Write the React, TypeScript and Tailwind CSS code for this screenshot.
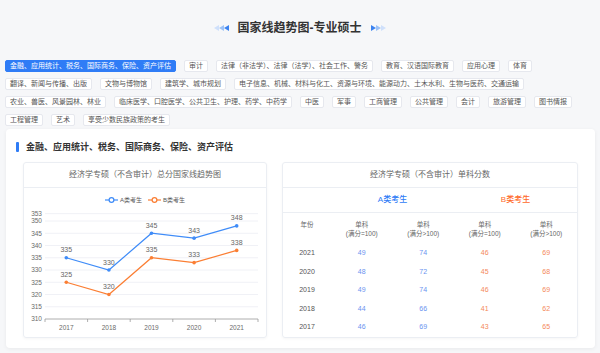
import React from "react";

const FONT = { fontFamily: '"Liberation Sans", "Noto Sans CJK SC", sans-serif' };

const rows: string[][] = [
  [
    "金融、应用统计、税务、国际商务、保险、资产评估",
    "审计",
    "法律（非法学）、法律（法学）、社会工作、警务",
    "教育、汉语国际教育",
    "应用心理",
    "体育",
  ],
  [
    "翻译、新闻与传播、出版",
    "文物与博物馆",
    "建筑学、城市规划",
    "电子信息、机械、材料与化工、资源与环境、能源动力、土木水利、生物与医药、交通运输",
  ],
  [
    "农业、兽医、风景园林、林业",
    "临床医学、口腔医学、公共卫生、护理、药学、中药学",
    "中医",
    "军事",
    "工商管理",
    "公共管理",
    "会计",
    "旅游管理",
    "图书情报",
  ],
  ["工程管理", "艺术", "享受少数民族政策的考生"],
];

const tags = rows.flat();

const years = ["2017", "2018", "2019", "2020", "2021"];
const aData = [335, 330, 345, 343, 348];
const bData = [325, 320, 335, 333, 338];

const yOf = (v: number) => 131 - (v - 310) * 2.45;
const xs = [42.3, 84.9, 127.5, 170.1, 212.7];
const ticksX = [21, 63.6, 106.2, 148.8, 191.4, 234];
const yTicks = [310, 315, 320, 325, 330, 335, 340, 345, 350, 353];

const BLUE = "#3f8cf8";
const ORANGE = "#fb7e33";

function Arrows({ dir }: { dir: "left" | "right" }) {
  const colors = dir === "left" ? ["#cfe0fb", "#9cc2f7", "#3b82f0"] : ["#3b82f0", "#9cc2f7", "#cfe0fb"];
  return (
    <svg width="16" height="6" viewBox="0 0 16 6">
      {[0, 5, 10].map((o, i) =>
        dir === "left" ? (
          <polygon key={i} points={`${o},3 ${o + 5},0 ${o + 5},6`} fill={colors[i]} />
        ) : (
          <polygon key={i} points={`${o},0 ${o + 5},3 ${o},6`} fill={colors[i]} />
        )
      )}
    </svg>
  );
}

function Chart() {
  const path = (d: number[]) => d.map((v, i) => `${i === 0 ? "M" : "L"}${xs[i]},${yOf(v)}`).join(" ");
  return (
    <svg width="242" height="148" viewBox="0 0 242 148" style={FONT}>
      {/* legend */}
      <line x1="81" y1="12" x2="94" y2="12" stroke={BLUE} strokeWidth="1.2" />
      <circle cx="87.5" cy="12" r="2.4" fill="white" stroke={BLUE} strokeWidth="1.2" />
      <text x="96" y="14.2" fontSize="6" fill="#555">A类考生</text>
      <line x1="124" y1="12" x2="137" y2="12" stroke={ORANGE} strokeWidth="1.2" />
      <circle cx="130.5" cy="12" r="2.4" fill="white" stroke={ORANGE} strokeWidth="1.2" />
      <text x="139" y="14.2" fontSize="6" fill="#555">B类考生</text>

      {/* grid */}
      {yTicks.map((v) => (
        <g key={v}>
          {v !== 310 && (
            <line x1="21" y1={yOf(v)} x2="234" y2={yOf(v)} stroke="#eceef4" strokeWidth="0.8" />
          )}
          <text x="18" y={yOf(v) + 2.3} fontSize="6.5" fill="#6b6b6b" textAnchor="end">
            {v}
          </text>
        </g>
      ))}
      <line x1="21" y1="131" x2="234" y2="131" stroke="#9a9a9a" strokeWidth="0.8" />
      {ticksX.map((x) => (
        <line key={x} x1={x} y1="131" x2={x} y2="134" stroke="#9a9a9a" strokeWidth="0.8" />
      ))}
      {years.map((y, i) => (
        <text key={y} x={xs[i]} y="141.5" fontSize="6.5" fill="#6b6b6b" textAnchor="middle">
          {y}
        </text>
      ))}

      {/* lines */}
      <path d={path(aData)} fill="none" stroke={BLUE} strokeWidth="1.2" />
      <path d={path(bData)} fill="none" stroke={ORANGE} strokeWidth="1.2" />
      {aData.map((v, i) => (
        <g key={"a" + i}>
          <circle cx={xs[i]} cy={yOf(v)} r="1.8" fill={BLUE} />
          <text x={xs[i]} y={yOf(v) - 5.5} fontSize="7" fill="#666" textAnchor="middle">
            {v}
          </text>
        </g>
      ))}
      {bData.map((v, i) => (
        <g key={"b" + i}>
          <circle cx={xs[i]} cy={yOf(v)} r="1.8" fill={ORANGE} />
          <text x={xs[i]} y={yOf(v) - 5.5} fontSize="7" fill="#666" textAnchor="middle">
            {v}
          </text>
        </g>
      ))}
    </svg>
  );
}

const tableRows = [
  ["2021", "49", "74", "46", "69"],
  ["2020", "48", "72", "45", "68"],
  ["2019", "49", "74", "46", "69"],
  ["2018", "44", "66", "41", "62"],
  ["2017", "46", "69", "43", "65"],
];

export default function App() {
  return (
    <div className="w-[600px] h-[353px] bg-[#f6f7f9] overflow-hidden" style={FONT}>
      {/* title */}
      <div className="pt-[20px] h-[36px] flex items-center justify-center">
        <div className="h-[16px] flex items-center">
          <Arrows dir="left" />
          <span className="ml-[8px] mr-[9px] text-[12px] leading-[16px] font-bold text-[#333]">
            国家线趋势图-专业硕士
          </span>
          <Arrows dir="right" />
        </div>
      </div>

      {/* tags */}
      <div className="mt-[24px] px-[5px] flex flex-wrap gap-x-[8px] gap-y-[6px]">
        {tags.map((t, i) => (
          <div
            key={t}
            className={
              i === 0
                ? "h-[12px] leading-[10px] px-[4px] text-[7px] rounded-[2px] border border-[#2f7cf6] bg-[#2f7cf6] text-white whitespace-nowrap"
                : "h-[12px] leading-[10px] px-[4px] text-[7px] rounded-[2px] border border-[#e6e8ee] bg-white text-[#555] whitespace-nowrap"
            }
          >
            {t}
          </div>
        ))}
      </div>

      {/* main card */}
      <div className="mt-[3px] ml-[6px] w-[589px] bg-white rounded-[4px] shadow-[0_1px_4px_rgba(0,0,0,0.06)] pt-[12px] pb-[10px]">
        <div className="h-[12px] flex items-center pl-[10px] mb-[9px]">
          <div className="w-[3px] h-[10px] bg-[#2f7cf6] rounded-[1px]" />
          <span className="ml-[7px] text-[9px] leading-[12px] font-bold text-[#333]">
            金融、应用统计、税务、国际商务、保险、资产评估
          </span>
        </div>

        <div className="px-[17px] flex gap-[15px]">
          {/* left chart card */}
          <div className="w-[244px] border border-[#ebeef3] rounded-[3px] shadow-[0_1px_3px_rgba(0,0,0,0.04)]">
            <div className="h-[25px] border-b border-[#ebeef3] flex items-center justify-center text-[8px] text-[#666]">
              经济学专硕（不含审计）总分国家线趋势图
            </div>
            <Chart />
          </div>

          {/* right table card */}
          <div className="flex-1 border border-[#ebeef3] rounded-[3px] shadow-[0_1px_3px_rgba(0,0,0,0.04)]">
            <div className="h-[25px] border-b border-[#ebeef3] flex items-center justify-center text-[8px] text-[#666]">
              经济学专硕（不含审计）单科分数
            </div>
            <div className="h-[25px] border-b border-[#ebeef3] grid grid-cols-[48px_1fr_1fr] items-center text-[8px] font-medium">
              <div />
              <div className="text-center text-[#2f7cf6]">A类考生</div>
              <div className="text-center text-[#ff6a2b]">B类考生</div>
            </div>
            <div className="h-[31px] grid grid-cols-[48px_1fr_1fr_1fr_1fr] items-center text-[6.5px] text-[#666] leading-[9px]">
              <div className="text-center -mt-[9px]">年份</div>
              {["(满分=100)", "(满分>100)", "(满分=100)", "(满分>100)"].map((s, i) => (
                <div key={i} className="text-center">
                  <div>单科</div>
                  <div>{s}</div>
                </div>
              ))}
            </div>
            {tableRows.map((r) => (
              <div key={r[0]} className="h-[18.5px] grid grid-cols-[48px_1fr_1fr_1fr_1fr] items-center text-[7px]">
                <div className="text-center text-[#555]">{r[0]}</div>
                <div className="text-center text-[#6a93ef]">{r[1]}</div>
                <div className="text-center text-[#6a93ef]">{r[2]}</div>
                <div className="text-center text-[#f4885a]">{r[3]}</div>
                <div className="text-center text-[#f4885a]">{r[4]}</div>
              </div>
            ))}
          </div>
        </div>
      </div>
    </div>
  );
}
